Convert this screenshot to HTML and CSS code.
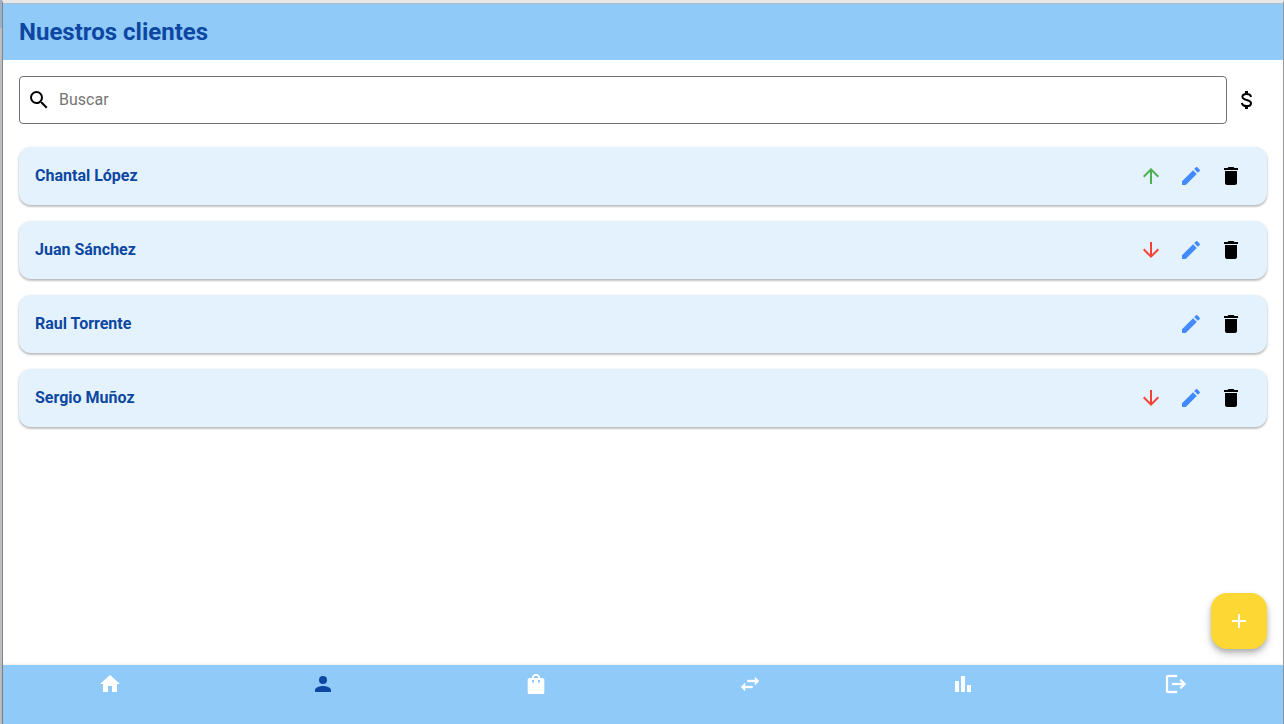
FILE: index.html
```
<!DOCTYPE html>
<html lang="es">
<head>
<meta charset="utf-8">
<meta name="viewport" content="width=device-width, initial-scale=1">
<title>Nuestros clientes</title>
<link rel="stylesheet" href="styles.css">
</head>
<body>
<svg class="sprite" aria-hidden="true">
  <symbol id="up" viewBox="0 0 24 24"><path d="M4 12l1.41 1.41L11 7.83V20h2V7.83l5.58 5.59L20 12l-8-8-8 8z"/></symbol>
  <symbol id="down" viewBox="0 0 24 24"><path d="M20 12l-1.41-1.41L13 16.17V4h-2v12.17l-5.58-5.59L4 12l8 8 8-8z"/></symbol>
  <symbol id="edit" viewBox="0 0 24 24"><path d="M3 17.25V21h3.75L17.81 9.94l-3.75-3.75L3 17.25zM20.71 7.04a1 1 0 0 0 0-1.41l-2.34-2.34a1 1 0 0 0-1.41 0l-1.83 1.83 3.75 3.75 1.83-1.83z"/></symbol>
  <symbol id="delete" viewBox="0 0 24 24"><path d="M6 19c0 1.100.9 2 2 2h8c1.100 0 2-.9 2-2V7H6v12zM19 4h-3.500l-1-1h-5l-1 1H5v2h14V4z"/></symbol>
</svg>
<div class="app">
  <header class="topbar"><h1>Nuestros clientes</h1></header>
  <main class="content">
    <form class="tools" role="search">
      <label class="search">
        <svg class="icon" viewBox="0 0 24 24" aria-hidden="true"><path d="M15.500 14h-.79l-.28-.27A6.470 6.470 0 0 0 16 9.500 6.500 6.500 0 1 0 9.500 16c1.610 0 3.090-.59 4.230-1.570l.27.28v.79l5 4.990L20.490 19l-4.990-5zm-6 0a4.500 4.500 0 1 1 0-9 4.500 4.500 0 0 1 0 9z"/></svg>
        <input type="text" placeholder="Buscar" aria-label="Buscar">
      </label>
      <button class="icon-button" type="button" aria-label="Filtrar por saldo">
        <svg class="icon" viewBox="0 0 24 24"><path d="M10 3h3v3h-3zM10 18h3v3h-3z"/><path fill="none" stroke="currentColor" stroke-width="2" d="M15.900 9C15.800 7 14.200 5.900 11.600 5.900 9.100 5.900 7.400 7 7.400 8.700c0 4.300 8.600 2.300 8.600 6.500 0 1.800-1.800 2.900-4.400 2.900-2.700 0-4.500-1.100-4.600-3.200"/></svg>
      </button>
    </form>
    <ul class="clients">
      <li class="client">
        <span class="name">Chantal López</span>
        <svg class="icon credit" role="img" aria-label="Saldo a favor"><use href="#up"/></svg>
        <button class="icon-button edit" type="button" aria-label="Editar"><svg class="icon"><use href="#edit"/></svg></button>
        <button class="icon-button" type="button" aria-label="Eliminar"><svg class="icon"><use href="#delete"/></svg></button>
      </li>
      <li class="client">
        <span class="name">Juan Sánchez</span>
        <svg class="icon debt" role="img" aria-label="Saldo pendiente"><use href="#down"/></svg>
        <button class="icon-button edit" type="button" aria-label="Editar"><svg class="icon"><use href="#edit"/></svg></button>
        <button class="icon-button" type="button" aria-label="Eliminar"><svg class="icon"><use href="#delete"/></svg></button>
      </li>
      <li class="client">
        <span class="name">Raul Torrente</span>
        <button class="icon-button edit" type="button" aria-label="Editar"><svg class="icon"><use href="#edit"/></svg></button>
        <button class="icon-button" type="button" aria-label="Eliminar"><svg class="icon"><use href="#delete"/></svg></button>
      </li>
      <li class="client">
        <span class="name">Sergio Muñoz</span>
        <svg class="icon debt" role="img" aria-label="Saldo pendiente"><use href="#down"/></svg>
        <button class="icon-button edit" type="button" aria-label="Editar"><svg class="icon"><use href="#edit"/></svg></button>
        <button class="icon-button" type="button" aria-label="Eliminar"><svg class="icon"><use href="#delete"/></svg></button>
      </li>
    </ul>
    <button class="fab" type="button" aria-label="Añadir cliente">
      <svg class="icon" viewBox="0 0 24 24"><path d="M19 13h-6v6h-2v-6H5v-2h6V5h2v6h6v2z"/></svg>
    </button>
  </main>
  <nav class="bottombar" aria-label="Principal">
    <a href="#inicio" aria-label="Inicio"><svg class="icon" viewBox="0 0 24 24"><path d="M10 20v-6h4v6h5v-8h3L12 3 2 12h3v8z"/></svg></a>
    <a class="current" href="#clientes" aria-label="Clientes" aria-current="page"><svg class="icon" viewBox="0 0 24 24"><path d="M12 12a4 4 0 1 0 0-8 4 4 0 0 0 0 8zm0 2c-2.670 0-8 1.340-8 4v2h16v-2c0-2.660-5.330-4-8-4z"/></svg></a>
    <a href="#productos" aria-label="Productos"><svg class="icon" viewBox="0 0 24 24"><path fill-rule="evenodd" d="M5.300 6H8a4 4 0 0 1 8 0h2.700A1.600 1.600 0 0 1 20.300 7.600v12.800a1.600 1.600 0 0 1-1.600 1.600H5.300a1.600 1.600 0 0 1-1.600-1.600V7.600A1.600 1.600 0 0 1 5.300 6zM9.700 6h4.600a2.300 2.300 0 0 0-4.600 0zM8 8v1.700a1 1 0 0 0 2 0V8zm6 0v1.700a1 1 0 0 0 2 0V8z"/></svg></a>
    <a href="#movimientos" aria-label="Movimientos"><svg class="icon" viewBox="0 0 24 24"><path stroke="currentColor" stroke-width=".4" d="M21 9l-4-4v3H9.500v2H17v3l4-4zM7 11l-4 4 4 4v-3h7.500v-2H7v-3z"/></svg></a>
    <a href="#estadisticas" aria-label="Estadísticas"><svg class="icon" viewBox="0 0 24 24"><path d="M4 9h4v11H4zM10 4h4v16h-4zM16 13h4v7h-4z"/></svg></a>
    <a href="#salir" aria-label="Salir"><svg class="icon" viewBox="0 0 24 24"><path stroke="currentColor" stroke-width=".3" d="M13 3H4a2 2 0 0 0-2 2v14a2 2 0 0 0 2 2h9v-2H4V5h9zM17 7l-1.410 1.410L18.170 11H8v2h10.170l-2.580 2.580L17 17l5-5z"/></svg></a>
  </nav>
</div>
</body>
</html>
```
FILE: styles.css
```
* { box-sizing: border-box; }

body {
  margin: 0;
  background: linear-gradient(#9fafc7 28px, #bdbec2 28px);
  font-family: Roboto, "Liberation Sans", sans-serif;
}

.sprite { display: none; }

.app {
  display: flex;
  flex-direction: column;
  min-height: 100vh;
  margin-left: 2px;
  border-left: 1px solid #858585;
  border-right: 1px solid #999;
  border-top: 3px solid #e8e8e8;
  background: #fff;
}

.topbar {
  padding: 12px 16px;
  border-top: 1px solid #a9bfd0;
  background: #90caf9;
  color: #0d47a1;
}

.topbar h1 {
  margin: 0;
  font-size: 24px;
  font-weight: 700;
  line-height: 32px;
}

.content {
  position: relative;
  flex: 1;
  padding: 16px;
}

.tools {
  display: flex;
  align-items: center;
  gap: 8px;
  padding-right: 8px;
}

.search {
  display: flex;
  flex: 1;
  align-items: center;
  gap: 8px;
  height: 48px;
  padding: 0 7px;
  border: 1px solid #737373;
  border-radius: 4px;
}

.search input {
  flex: 1;
  min-width: 0;
  padding: 0;
  border: 0;
  outline: 0;
  background: none;
  font: 16px/24px Roboto, "Liberation Sans", sans-serif;
}

.search input::placeholder { color: #757575; }

.icon {
  display: block;
  flex: none;
  width: 24px;
  height: 24px;
  fill: currentColor;
}

.icon-button {
  padding: 0;
  border: 0;
  background: none;
  color: #000;
  cursor: pointer;
}

.clients {
  display: flex;
  flex-direction: column;
  gap: 16px;
  margin: 23px 0 0;
  padding: 0;
  list-style: none;
}

.client {
  display: flex;
  align-items: center;
  gap: 16px;
  height: 58px;
  padding: 0 24px 0 16px;
  border-radius: 12px;
  background: #e3f2fd;
  box-shadow: 0 1px 3px rgba(0, 0, 0, .2), 0 2px 2px rgba(0, 0, 0, .14);
}

.name {
  flex: 1;
  color: #0d47a1;
  font-size: 16px;
  font-weight: 700;
  line-height: 24px;
}

.credit { color: #4caf50; }
.debt { color: #f44336; }
.edit { color: #448aff; }

.fab {
  position: absolute;
  right: 16px;
  bottom: 16px;
  display: grid;
  place-items: center;
  width: 56px;
  height: 56px;
  padding: 0;
  border: 0;
  border-radius: 16px;
  background: #fdd835;
  color: #fff;
  box-shadow: 0 3px 5px rgba(0, 0, 0, .2), 0 5px 10px rgba(0, 0, 0, .16);
  cursor: pointer;
}

.bottombar {
  display: grid;
  grid-template-columns: repeat(6, 1fr);
  background: #90caf9;
  box-shadow: 0 0 4px rgba(0, 0, 0, .12);
}

.bottombar a {
  display: flex;
  justify-content: center;
  padding: 7px 0 28px;
  color: #fff;
}

.bottombar .current { color: #0d47a1; }
```
